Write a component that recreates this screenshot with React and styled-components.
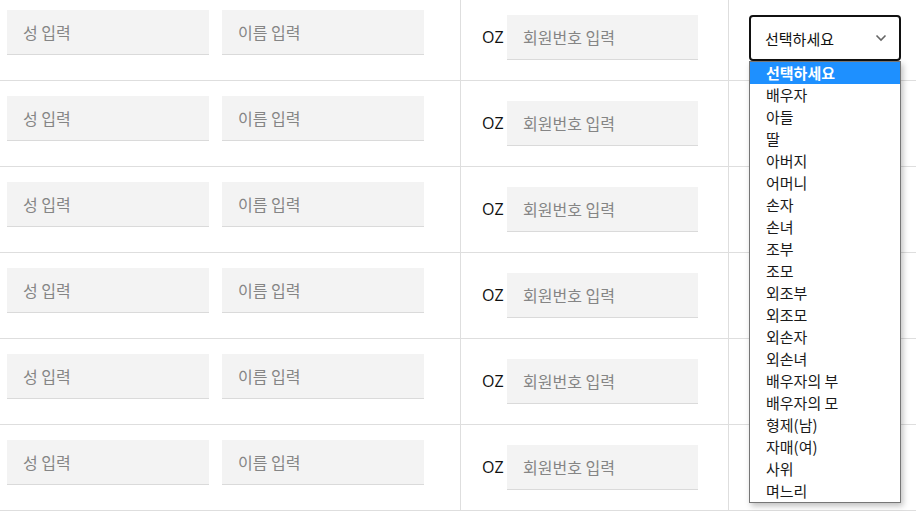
import React from "react";
import styled, { createGlobalStyle } from "styled-components";

const GlobalStyle = createGlobalStyle`
  html, body {
    margin: 0;
    padding: 0;
    background: #fff;
    overflow: hidden;
  }
  body {
    font-family: "Noto Sans CJK KR", "Noto Sans", sans-serif;
  }
`;

const Table = styled.div`
  margin-top: -5px;
  width: 916px;
`;

const Row = styled.div`
  display: grid;
  grid-template-columns: 461px 268px 1fr;
  height: 85px;
  border-bottom: 1px solid #dedede;
`;

const Cell = styled.div`
  display: flex;
  align-items: flex-start;
  padding-top: ${({ top }) => top}px;
  padding-left: ${({ left }) => left}px;
  border-right: ${({ divider }) => (divider ? "1px solid #dedede" : "none")};
  gap: ${({ gap }) => gap || 0}px;
  position: relative;
`;

const TextInput = styled.div`
  width: ${({ w }) => w}px;
  height: 45px;
  box-sizing: border-box;
  background: #f3f3f3;
  border-bottom: 1px solid #dadada;
  padding-left: 16px;
  display: flex;
  align-items: center;
  font-size: 16px;
  color: #858585;
`;

const Prefix = styled.span`
  font-family: "Open Sans", "Noto Sans", sans-serif;
  font-size: 16px;
  color: #111;
  line-height: 44px;
  width: 25px;
`;

const SelectBox = styled.div`
  width: 152px;
  height: 46px;
  box-sizing: border-box;
  border: 2px solid #111;
  border-radius: 4px;
  display: flex;
  align-items: center;
  justify-content: space-between;
  padding: 0 12px 0 14px;
  font-size: 15px;
  color: #111;
  background: #fff;
`;

const Dropdown = styled.ul`
  position: absolute;
  left: 20px;
  top: 66px;
  width: 152px;
  margin: 0;
  padding: 0;
  list-style: none;
  box-sizing: border-box;
  border: 1px solid #767676;
  background: #fff;
  box-shadow: 2px 3px 6px rgba(0, 0, 0, 0.25);
  z-index: 10;
`;

const Option = styled.li`
  height: 22px;
  line-height: 22px;
  padding-left: 16px;
  font-size: 15px;
  color: ${({ active }) => (active ? "#fff" : "#1a1a1a")};
  background: ${({ active }) => (active ? "#1e90ff" : "transparent")};
  font-weight: ${({ active }) => (active ? 700 : 400)};
`;

const options = [
  "선택하세요",
  "배우자",
  "아들",
  "딸",
  "아버지",
  "어머니",
  "손자",
  "손녀",
  "조부",
  "조모",
  "외조부",
  "외조모",
  "외손자",
  "외손녀",
  "배우자의 부",
  "배우자의 모",
  "형제(남)",
  "자매(여)",
  "사위",
  "며느리",
];

const Chevron = () => (
  <svg width="12" height="8" viewBox="0 0 12 8">
    <path d="M1.5 1.5 L6 6 L10.5 1.5" fill="none" stroke="#666" strokeWidth="1.6" />
  </svg>
);

const App = () => {
  const rows = [0, 1, 2, 3, 4, 5];
  return (
    <>
      <GlobalStyle />
      <Table>
        {rows.map((i) => (
          <Row key={i}>
            <Cell top={15} left={7} gap={13} divider>
              <TextInput w={202}>성 입력</TextInput>
              <TextInput w={202}>이름 입력</TextInput>
            </Cell>
            <Cell top={20} left={21} divider>
              <Prefix>OZ</Prefix>
              <TextInput w={191}>회원번호 입력</TextInput>
            </Cell>
            <Cell top={20} left={20}>
              {i === 0 && (
                <>
                  <SelectBox>
                    <span>선택하세요</span>
                    <Chevron />
                  </SelectBox>
                  <Dropdown>
                    {options.map((o, idx) => (
                      <Option key={o} active={idx === 0}>
                        {o}
                      </Option>
                    ))}
                  </Dropdown>
                </>
              )}
            </Cell>
          </Row>
        ))}
      </Table>
    </>
  );
};

export default App;
